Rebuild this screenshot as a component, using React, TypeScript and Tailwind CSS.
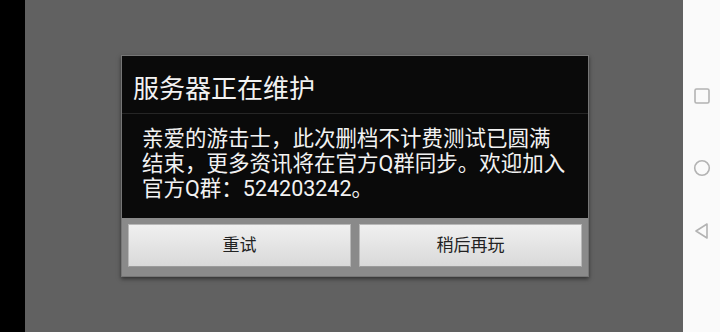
import React from "react";

export default function App() {
  const font = { fontFamily: "Roboto, 'Noto Sans CJK SC', sans-serif" };
  return (
    <div className="flex h-[332px] w-[720px] overflow-hidden" style={font}>
      <div className="w-[25px] shrink-0 bg-black" />
      <div className="flex-1 bg-[#616161] pl-[96px] pt-[55px]">
        <div className="w-[468px] border border-[#767676] bg-[#0a0a0a] shadow-[0_2px_4px_rgba(0,0,0,0.5)]">
          <div className="flex h-[57px] items-center pl-[11px] pt-[8px] text-[26px] leading-none text-[#f2f2f2]">
            服务器正在维护
          </div>
          <div className="h-px bg-[#262626]" />
          <div className="pb-[17px] pl-[20px] pt-[12px] text-[21.5px] leading-[25px] text-[#f2f2f2]">
            <div>亲爱的游击士，此次删档不计费测试已圆满</div>
            <div>结束，更多资讯将在官方Q群同步。欢迎加入</div>
            <div>官方Q群：524203242。</div>
          </div>
          <div className="flex gap-[8px] bg-[#8a8a8a] px-[6px] pb-[9px] pt-[6px]">
            <button className="flex h-[43px] flex-1 items-center justify-center border border-[#b8b8b8] border-b-[#9a9a9a] bg-gradient-to-b from-[#f0f0f0] to-[#d9d9d9] text-[17px] text-[#222222]">
              重试
            </button>
            <button className="flex h-[43px] flex-1 items-center justify-center border border-[#b8b8b8] border-b-[#9a9a9a] bg-gradient-to-b from-[#f0f0f0] to-[#d9d9d9] text-[17px] text-[#222222]">
              稍后再玩
            </button>
          </div>
        </div>
      </div>
      <div className="flex w-[37px] shrink-0 flex-col items-center bg-[#fafafa] pt-[88px]">
        <svg width="16" height="16" viewBox="0 0 16 16" className="ml-[1px]">
          <rect x="1" y="1" width="14" height="14" rx="1.5" fill="none" stroke="#b3b3b3" strokeWidth="1.6" />
        </svg>
        <svg width="18" height="18" viewBox="0 0 18 18" className="ml-[1px] mt-[55px]">
          <circle cx="9" cy="9" r="7.3" fill="none" stroke="#b3b3b3" strokeWidth="1.6" />
        </svg>
        <svg width="16" height="18" viewBox="0 0 16 18" className="mt-[45px]">
          <path d="M13 2 L2 9 L13 16 Z" fill="none" stroke="#b3b3b3" strokeWidth="1.6" strokeLinejoin="round" />
        </svg>
      </div>
    </div>
  );
}
